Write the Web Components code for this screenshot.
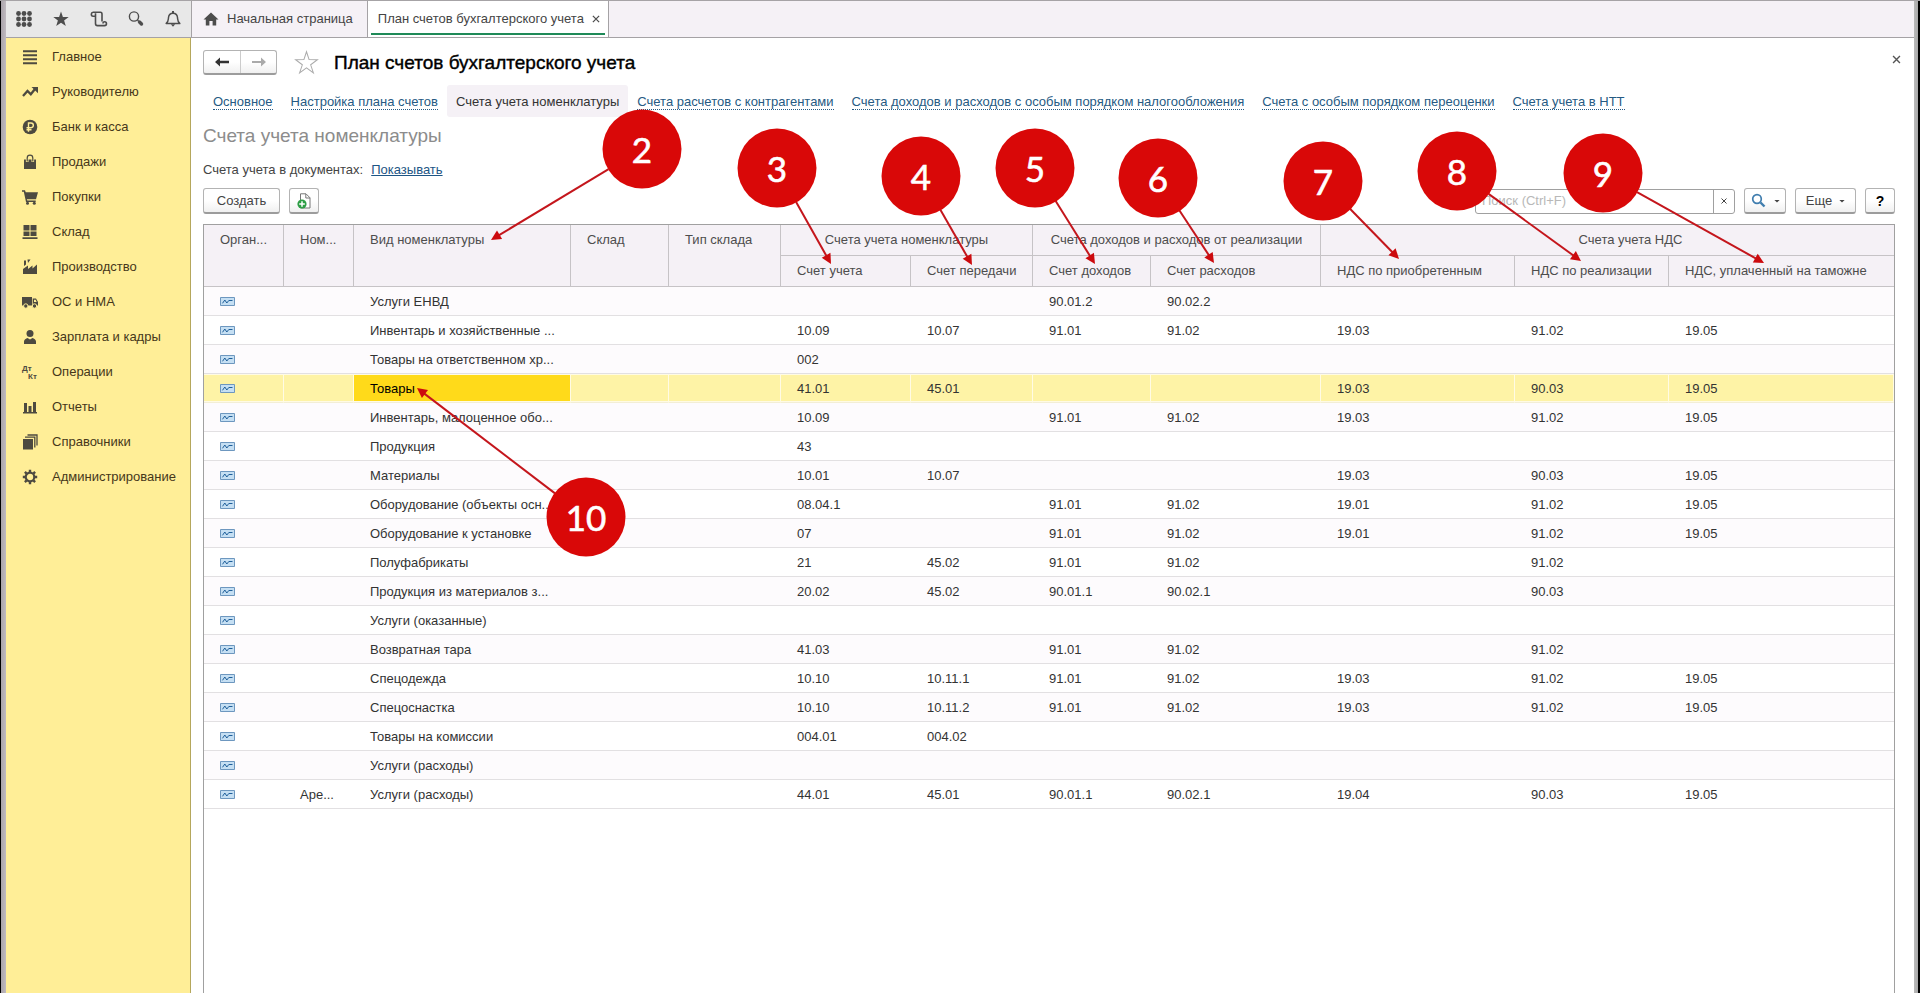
<!DOCTYPE html>
<html lang="ru">
<head>
<meta charset="utf-8">
<title>План счетов бухгалтерского учета</title>
<style>
  body {
    margin: 0;
    font: 13px/16px "Liberation Sans", Arial, sans-serif;
    color: #333;
  }
</style>
</head>
<body>
<app-window>
  <top-bar slot="top"></top-bar>
  <side-menu slot="side"></side-menu>
  <accounts-page></accounts-page>
  <callout-layer slot="overlay"></callout-layer>
</app-window>

<script>
const define = (name, html, setup) => {
  const template = document.createElement('template');
  template.innerHTML = html;
  customElements.define(name, class extends HTMLElement {
    constructor() {
      super();
      this.attachShadow({ mode: 'open' }).append(template.content.cloneNode(true));
    }
    connectedCallback() {
      if (setup && !this.ready) { this.ready = true; setup(this, this.shadowRoot); }
    }
  });
};

/* Icon glyphs, each on a 16 by 16 grid */
const ICONS = {
  grid: '<g fill="currentColor">' + [2.5, 8, 13.5].map(y => [2.5, 8, 13.5].map(x => `<circle cx="${x}" cy="${y}" r="2.4"/>`).join('')).join('') + '</g>',
  star: '<path fill="currentColor" d="M8 .5l1.9 5.400 5.800.1-4.600 3.500 1.700 5.600L8 11.800l-4.800 3.300 1.700-5.600L.3 6l5.800-.1z"/>',
  scroll: '<g fill="none" stroke="currentColor" stroke-width="1.600"><path d="M4.500 5.300H2.200A1.900 1.900 0 0 1 2.500 1.300H9.500Q11 1.300 11 3.300V10.500M4.500 2.300V12.500Q4.500 14.600 6.500 14.600H13.500A1.900 1.900 0 0 0 13.500 10.700Q12 10.700 12 12.600"/></g>',
  lens: '<circle cx="6" cy="5.500" r="4.600" fill="none" stroke="currentColor" stroke-width="1.400"/><path d="M9.500 9l1 1" stroke="currentColor" stroke-width="1.500"/><path d="M11.500 11l2 2" stroke="currentColor" stroke-width="3.400" stroke-linecap="round"/>',
  bell: '<path d="M1.200 12.500C3.500 11 3.200 9 3.500 6.500 3.800 3.500 5.500 2.200 8 2.200s4.200 1.300 4.500 4.300c.3 2.500 0 4.500 2.300 6z" fill="none" stroke="currentColor" stroke-width="1.500" stroke-linejoin="round"/><path d="M7 0h2v2.500H7zM5.800 13.300h4.400L8 15.800z" fill="currentColor"/>',
  home: '<path fill="currentColor" d="M8 1.500l7.500 7H13.200V14.500H9.600V10H6.400v4.500H2.800V8.500H.5z"/>',
  lines: '<path d="M1 2.200h14M1 6.200h14M1 10.200h14M1 14.200h14" stroke="currentColor" stroke-width="2"/>',
  trend: '<path d="M1 12l4.500-5 3.300 3.300L13 5" fill="none" stroke="currentColor" stroke-width="2.300"/><path d="M9.500 3H16v6.200z" fill="currentColor"/>',
  ruble: '<circle cx="8" cy="8" r="7.300" fill="currentColor"/><path d="M6.500 12.800V4H9a2.300 2.300 0 0 1 0 4.700H4.500M4.500 10.700h5" fill="none" stroke="#ffee97" stroke-width="1.400"/>',
  bag: '<path d="M2 5.500h12V15H2z" fill="currentColor"/><path d="M5.200 8V4a2.800 2.800 0 0 1 5.600 0v4" fill="none" stroke="#ffee97" stroke-width="2.600"/><path d="M5.200 7.500V4a2.800 2.800 0 0 1 5.600 0v3.500" fill="none" stroke="currentColor" stroke-width="1.200"/>',
  cart: '<path d="M0 1.200h3l.7 2H16L14 10.200H4.800l.5 1.300H13.700V13H4L1.800 2.700H0z" fill="currentColor"/><circle cx="5.500" cy="14.200" r="1.500" fill="currentColor"/><circle cx="12.300" cy="14.200" r="1.500" fill="currentColor"/>',
  store: '<path d="M1.500 1h6v5.500h-6zM8.500 1h6v5.500h-6zM1.500 7.500h6V12h-6zM8.500 7.500h6V12h-6zM.5 13.300h15V15H.5z" fill="currentColor"/>',
  factory: '<path d="M1 15V10L6 6.500V10L10.500 6.500V9.500L15 5.500V15z" fill="currentColor"/><path d="M2 1.500h2V5.500l-2 1.500zM5.500.5h3L6 4z" fill="currentColor"/>',
  truck: '<path d="M0 3h10v8.500H0zM10.700 4.500H14L16 8v3.500h-5.300z" fill="currentColor"/><path d="M12 5.700h1.600L14.700 8H12z" fill="#ffee97"/><circle cx="3.800" cy="12" r="2.200" fill="currentColor" stroke="#ffee97"/><circle cx="12.500" cy="12" r="2.200" fill="currentColor" stroke="#ffee97"/>',
  person: '<circle cx="8" cy="4.500" r="3.500" fill="currentColor"/><path d="M2 15v-2.500C2 10.500 4 9.500 5.500 9L8 10.500 10.500 9c1.500.5 3.500 1.500 3.500 3.500V15z" fill="currentColor"/>',
  dtkt: '<g fill="currentColor" font-family="Liberation Sans, sans-serif" font-size="8" font-weight="bold"><text x="0" y="7">Дт</text><text x="6" y="15">Кт</text></g>',
  chart: '<path d="M1 13h14v1.500H1zM2 4h3v9H2zM6.500 7h3v6h-3zM11 3h3v10h-3z" fill="currentColor"/>',
  books: '<path d="M1 5h10v10.500H1z" fill="currentColor"/><path d="M3 3.200h9.800V13.500M5.500 1H15v10.500" fill="none" stroke="currentColor" stroke-width="1.300"/>',
  gear: '<circle cx="8" cy="8" r="4.300" fill="none" stroke="currentColor" stroke-width="2.200"/><g stroke="currentColor" stroke-width="2.400"><path d="M8 .8v2.400M8 12.800v2.400M.8 8h2.400M12.800 8h2.400M2.900 2.900l1.700 1.700M11.400 11.400l1.700 1.700M2.900 13.100l1.700-1.700M11.400 4.600l1.700-1.700"/></g>',
  back: '<path d="M1 8l5-4.500v3.200h9v2.600H6v3.200z" fill="currentColor"/>',
  forward: '<path d="M15 8l-5-4.500v3.500H1v2h9v3.500z" fill="currentColor"/>',
  favorite: '<path fill="none" stroke="#aaa" stroke-width=".7" d="M8 .5l1.800 5.500 5.800.1-4.700 3.500 1.900 5.600L8 11.700l-4.800 3.500 1.900-5.600L.4 6.100l5.800-.1z"/>',
  close: '<path d="M3 3l10 10M13 3L3 13" stroke="currentColor" stroke-width="2"/>',
  add: '<path d="M4.500.8H10l4 4V15H4.500z" fill="#fff" stroke="#777"/><path d="M9.800 1v4H14" fill="none" stroke="#777"/><circle cx="6" cy="11" r="4.600" fill="#2e9e46"/><path d="M6 8.200v5.600M3.200 11h5.600" stroke="#fff" stroke-width="1.500"/>',
  find: '<circle cx="6" cy="6" r="4.300" fill="none" stroke="#3f7dae" stroke-width="1.700"/><path d="M9.500 9.500L13.500 13.500" stroke="#3f7dae" stroke-width="2.400"/>',
  caret: '<path d="M1 5h14L8 12z" fill="currentColor"/>'
};

define('ui-icon', `
<style>
  :host { display: inline-block; width: 16px; height: 16px; flex: none; }
  svg { display: block; width: 100%; height: 100%; overflow: visible; }
</style>
<svg viewBox="0 0 16 16" aria-hidden="true"></svg>`,
(el, root) => { root.querySelector('svg').innerHTML = ICONS[el.getAttribute('name')]; });

define('app-window', `
<style>
  :host {
    display: grid;
    position: relative;
    overflow: hidden;
    box-sizing: border-box;
    min-height: 100vh;
    grid-template: 37px 1fr / 185px minmax(0, 1fr);
    padding: 0 6px;
    border-top: 1px solid #a6a3a6;
    background:
      linear-gradient(to right, #000 1px, #a9a3a9 1px, #c0bac0 6px) left / 6px 100% no-repeat,
      linear-gradient(to left, #000 2px, #a9a9a9 2px, #b9b9b9 6px) right / 6px 100% no-repeat,
      #fff;
  }
  .top { grid-column: 1 / 3; }
  .side, .main { display: grid; }
</style>
<div class="top"><slot name="top"></slot></div>
<div class="side"><slot name="side"></slot></div>
<div class="main"><slot></slot></div>
<slot name="overlay"></slot>`);

define('top-bar', `
<style>
  :host {
    display: flex;
    box-sizing: border-box;
    height: 37px;
    background: #f5f1f6;
    border-bottom: 1px solid #a5a2a5;
  }
  .tools {
    display: flex;
    justify-content: space-between;
    align-items: center;
    box-sizing: border-box;
    width: 185px;
    padding: 0 10px;
    background: #e8e8e8;
  }
  button {
    display: inline-flex;
    padding: 0;
    border: 0;
    background: none;
    font: inherit;
    color: #4d4d4d;
  }
  nav { display: flex; }
  .tab {
    display: flex;
    align-items: center;
    position: relative;
    border-left: 1px solid #a5a2a5;
    color: #444;
  }
  a { color: inherit; text-decoration: none; }
  .home { padding: 0 14px 0 11px; gap: 8px; }
  .home ui-icon { color: #4d4d4d; }
  .open { background: #fff; padding: 0 7px 0 10px; gap: 7px; border-right: 1px solid #a5a2a5; }
  .open::after {
    content: "";
    position: absolute;
    inset: auto 3px 2px 3px;
    height: 2px;
    background: #1f8a58;
  }
  .open ui-icon { width: 10px; height: 10px; }
</style>
<div class="tools">
  <button aria-label="Меню"><ui-icon name="grid"></ui-icon></button>
  <button aria-label="Избранное"><ui-icon name="star"></ui-icon></button>
  <button aria-label="История"><ui-icon name="scroll"></ui-icon></button>
  <button aria-label="Поиск"><ui-icon name="lens"></ui-icon></button>
  <button aria-label="Оповещения"><ui-icon name="bell"></ui-icon></button>
</div>
<nav>
  <div class="tab home"><ui-icon name="home"></ui-icon><a href="#home">Начальная страница</a></div>
  <div class="tab open"><a href="#accounts">План счетов бухгалтерского учета</a><button aria-label="Закрыть"><ui-icon name="close"></ui-icon></button></div>
</nav>`);

define('side-menu', `
<style>
  :host { display: block; padding-top: 1px; background: #ffee97; border-right: 1px solid #b5a75c; }
  a {
    display: flex;
    align-items: center;
    gap: 14px;
    height: 35px;
    padding-left: 16px;
    color: #46371a;
    text-decoration: none;
  }
  ui-icon { color: #4d4a40; }
</style>
<nav></nav>`,
(el, root) => {
  const items = [
    ['lines', 'Главное'], ['trend', 'Руководителю'], ['ruble', 'Банк и касса'], ['bag', 'Продажи'],
    ['cart', 'Покупки'], ['store', 'Склад'], ['factory', 'Производство'], ['truck', 'ОС и НМА'],
    ['person', 'Зарплата и кадры'], ['dtkt', 'Операции'], ['chart', 'Отчеты'], ['books', 'Справочники'],
    ['gear', 'Администрирование']
  ];
  root.querySelector('nav').innerHTML =
    items.map(([icon, text]) => `<a href="#${icon}"><ui-icon name="${icon}"></ui-icon><span>${text}</span></a>`).join('');
});

define('push-button', `
<style>
  :host { display: inline-flex; height: 26px; }
  button {
    display: flex;
    align-items: center;
    justify-content: center;
    gap: 7px;
    box-sizing: border-box;
    width: 100%;
    padding: 0 6px;
    border: 1px solid #b3b3b3;
    border-bottom: 2px solid #9c9c9c;
    border-radius: 3px;
    background: linear-gradient(#fff 50%, #f0f0f0);
    font: inherit;
    color: inherit;
    white-space: nowrap;
  }
</style>
<button><slot></slot></button>`,
(el, root) => { if (el.title) root.querySelector('button').setAttribute('aria-label', el.title); });

define('accounts-page', `
<style>
  :host { display: flex; flex-direction: column; padding: 12px 12px 0; background: #fff; }
  .links, h2, .docs, .tools, accounts-table { margin-right: 7px; }
  .head { display: flex; align-items: center; height: 25px; margin-bottom: 10px; }
  .history {
    display: flex;
    box-sizing: border-box;
    height: 25px;
    border: 1px solid #b3b3b3;
    border-bottom: 2px solid #9c9c9c;
    border-radius: 3px;
    background: linear-gradient(#fff 50%, #f0f0f0);
  }
  .history button { width: 36px; padding: 0 10px; color: #333; }
  .history button + button { border-left: 1px solid #ccc; color: #aaa; }
  button { display: flex; align-items: center; padding: 0; border: 0; background: none; }
  .fav { margin: 0 16px 0 18px; }
  .fav ui-icon { width: 23px; height: 23px; }
  h1 { flex: 1; margin: 0; font: 19px/24px "Liberation Sans", Arial, sans-serif; color: #000; -webkit-text-stroke: .4px #000; }
  .close { align-self: flex-start; margin-top: 4px; color: #555; }
  .close ui-icon { width: 11px; height: 11px; }
  .links { display: flex; height: 32px; padding-left: 1px; }
  .links span {
    display: flex;
    align-items: center;
    padding: 2px 9px 0;
    border-radius: 3px;
  }
  .links .current { background: #f5f1f6; color: #333; }
  .links a { color: #265a83; text-decoration: none; border-bottom: 1px dotted #265a83; line-height: 15px; }
  h2 { margin-top: 7px; margin-bottom: 12px; font: 19px/24px "Liberation Sans", Arial, sans-serif; color: #8c8c8c; }
  .docs { display: flex; align-items: center; gap: 8px; height: 20px; margin-bottom: 8px; color: #444; }
  .docs a { color: #1d5585; }
  .tools { display: flex; align-items: center; gap: 9px; margin-bottom: 10px; color: #444; }
  .create { width: 77px; }
  .icon { width: 30px; }
  .search {
    display: flex;
    box-sizing: border-box;
    width: 260px;
    height: 25px;
    margin-left: auto;
    border: 1px solid #a0a0a0;
    border-radius: 3px;
    background: #fff;
  }
  .search input {
    flex: 1;
    min-width: 0;
    padding: 0 6px;
    border: 0;
    outline: 0;
    background: none;
    font: inherit;
  }
  .search input::placeholder { color: #b8b8b8; }
  .search button { width: 21px; justify-content: center; border-left: 1px solid #a0a0a0; color: #444; }
  .search ui-icon { width: 8px; height: 8px; }
  .find { width: 42px; }
  .more { width: 61px; }
  .help { width: 30px; font-weight: bold; font-size: 14px; color: #000; }
  .small { width: 6px; height: 6px; }
  accounts-table { flex: 1; }
</style>
<div class="head">
  <div class="history">
    <button aria-label="Назад"><ui-icon name="back"></ui-icon></button>
    <button aria-label="Вперед"><ui-icon name="forward"></ui-icon></button>
  </div>
  <button class="fav" aria-label="В избранное"><ui-icon name="favorite"></ui-icon></button>
  <h1>План счетов бухгалтерского учета</h1>
  <button class="close" aria-label="Закрыть"><ui-icon name="close"></ui-icon></button>
</div>
<nav class="links">
  <span><a href="#main">Основное</a></span>
  <span><a href="#setup">Настройка плана счетов</a></span>
  <span class="current">Счета учета номенклатуры</span>
  <span><a href="#partners">Счета расчетов с контрагентами</a></span>
  <span><a href="#tax">Счета доходов и расходов с особым порядком налогообложения</a></span>
  <span><a href="#revaluation">Счета с особым порядком переоценки</a></span>
  <span><a href="#ntt">Счета учета в НТТ</a></span>
</nav>
<h2>Счета учета номенклатуры</h2>
<div class="docs"><span>Счета учета в документах:</span><a href="#show">Показывать</a></div>
<div class="tools">
  <push-button class="create">Создать</push-button>
  <push-button class="icon" title="Скопировать"><ui-icon name="add"></ui-icon></push-button>
  <div class="search">
    <input type="text" aria-label="Поиск" placeholder="Поиск (Ctrl+F)">
    <button aria-label="Очистить"><ui-icon name="close"></ui-icon></button>
  </div>
  <push-button class="find" title="Найти"><ui-icon name="find"></ui-icon><ui-icon class="small" name="caret"></ui-icon></push-button>
  <push-button class="more"><span>Еще</span><ui-icon class="small" name="caret"></ui-icon></push-button>
  <push-button class="help">?</push-button>
</div>
<accounts-table></accounts-table>`);

define('accounts-table', `
<style>
  :host { display: block; border: 1px solid #a0a0a0; border-bottom: 0; background: #fff; }
  table { width: 100%; table-layout: fixed; border-collapse: separate; border-spacing: 0; }
  th, td { box-sizing: border-box; padding: 0 0 0 16px; text-align: left; font-weight: normal; white-space: nowrap; overflow: hidden; }
  th {
    height: 31px;
    background: #f5f1f6;
    border-right: 1px solid #c6c3c6;
    border-bottom: 1px solid #c6c3c6;
    color: #4d4d4d;
  }
  th[rowspan] { vertical-align: top; padding-top: 7px; }
  th[colspan] { text-align: center; padding: 0; }
  th.vat { padding-left: 46px; }
  th.edge { border-right: 0; }
  td { height: 29px; padding-top: 1px; border-bottom: 1px solid #e2e0e2; color: #333; }
  tbody tr:nth-child(odd) td { background: #fdfbfd; }
  tbody tr.selected td {
    background: #fef3a6;
    border-bottom-color: #f3eed6;
    border-right: 1px solid #fffbe4;
    box-shadow: inset 0 1px #fffbe4, inset 0 -1px #fffbe4;
  }
  tbody tr.selected td.current { background: #ffda1a; color: #000; }
  svg { display: block; }
</style>
<table>
  <colgroup></colgroup>
  <thead>
    <tr>
      <th rowspan="2">Орган...</th><th rowspan="2">Ном...</th><th rowspan="2">Вид номенклатуры</th>
      <th rowspan="2">Склад</th><th rowspan="2">Тип склада</th>
      <th colspan="2">Счета учета номенклатуры</th>
      <th colspan="2">Счета доходов и расходов от реализации</th>
      <th colspan="3" class="vat edge">Счета учета НДС</th>
    </tr>
    <tr>
      <th>Счет учета</th><th>Счет передачи</th><th>Счет доходов</th><th>Счет расходов</th>
      <th>НДС по приобретенным</th><th>НДС по реализации</th><th class="edge">НДС, уплаченный на таможне</th>
    </tr>
  </thead>
  <tbody></tbody>
</table>`,
(el, root) => {
  root.querySelector('colgroup').innerHTML =
    [80, 70, 217, 98, 112, 130, 122, 118, 170, 194, 154, 225].map(w => `<col style="width:${w}px">`).join('');
  /* item group | kind | account | transfer | income | expense | VAT in | VAT out | customs VAT */
  const rows = `
|Услуги ЕНВД|||90.01.2|90.02.2|||
|Инвентарь и хозяйственные ...|10.09|10.07|91.01|91.02|19.03|91.02|19.05
|Товары на ответственном хр...|002||||||
|Товары|41.01|45.01|||19.03|90.03|19.05
|Инвентарь, малоценное обо...|10.09||91.01|91.02|19.03|91.02|19.05
|Продукция|43||||||
|Материалы|10.01|10.07|||19.03|90.03|19.05
|Оборудование (объекты осн...|08.04.1||91.01|91.02|19.01|91.02|19.05
|Оборудование к установке|07||91.01|91.02|19.01|91.02|19.05
|Полуфабрикаты|21|45.02|91.01|91.02||91.02|
|Продукция из материалов з...|20.02|45.02|90.01.1|90.02.1||90.03|
|Услуги (оказанные)|||||||
|Возвратная тара|41.03||91.01|91.02||91.02|
|Спецодежда|10.10|10.11.1|91.01|91.02|19.03|91.02|19.05
|Спецоснастка|10.10|10.11.2|91.01|91.02|19.03|91.02|19.05
|Товары на комиссии|004.01|004.02|||||
|Услуги (расходы)|||||||
Аре...|Услуги (расходы)|44.01|45.01|90.01.1|90.02.1|19.04|90.03|19.05`.trim().split('\n');
  const mark = '<svg width="15" height="9" viewBox="0 0 15 9"><path d="M.5.5h14v8H.5z" fill="#c5dff3" stroke="#6d97bf"/><path d="M2.500 6.300L4.800 3l2 3 2-2.500H12.500" fill="none" stroke="#1f5f9a"/></svg>';
  root.querySelector('tbody').innerHTML = rows.map((line, i) => {
    const [group, kind, ...accounts] = line.split('|');
    const selected = i === 3;
    return `<tr${selected ? ' class="selected"' : ''}><td>${mark}</td><td>${group}</td>` +
      `<td${selected ? ' class="current"' : ''}>${kind}</td><td></td><td></td>` +
      accounts.map(a => `<td>${a}</td>`).join('') + '</tr>';
  }).join('');
});

/* Numbered callouts with arrows, drawn over the page */
define('callout-layer', `
<style>
  :host { display: block; position: absolute; inset: -1px 0 0 0; pointer-events: none; }
  svg { display: block; width: 100%; height: 100%; }
  text { font: 35px Lato, "Open Sans", sans-serif; fill: #fff; stroke: #fff; stroke-width: .6px; text-anchor: middle; }
  circle { fill: #d90808; }
  line { stroke: #c4161c; stroke-width: 2; }
  path { fill: #cc0a0e; }
</style>
<svg></svg>`,
(el, root) => {
  /* number, circle centre, arrow tip */
  const callouts = [
    [2, 642, 149, 491, 240], [3, 777, 168, 831, 264], [4, 921, 176, 972, 265], [5, 1035, 168, 1095, 264],
    [6, 1158, 178, 1214, 263], [7, 1323, 181, 1399, 259], [8, 1457, 171, 1581, 261], [9, 1603, 173, 1764, 263],
    [10, 586, 517, 417, 388]
  ];
  root.querySelector('svg').innerHTML = callouts.map(([n, cx, cy, x, y]) => {
    const angle = Math.atan2(y - cy, x - cx) * 180 / Math.PI;
    const length = Math.hypot(x - cx, y - cy);
    return `<g transform="translate(${cx} ${cy}) rotate(${angle})"><line x1="39" x2="${length - 8}" y1="0" y2="0"/>` +
      `<path d="M${length} 0l-10-5v10z"/></g>` +
      `<circle cx="${cx}" cy="${cy}" r="39.500"/><text x="${cx}" y="${cy + 14}">${n}</text>`;
  }).join('');
});
</script>
</body>
</html>
